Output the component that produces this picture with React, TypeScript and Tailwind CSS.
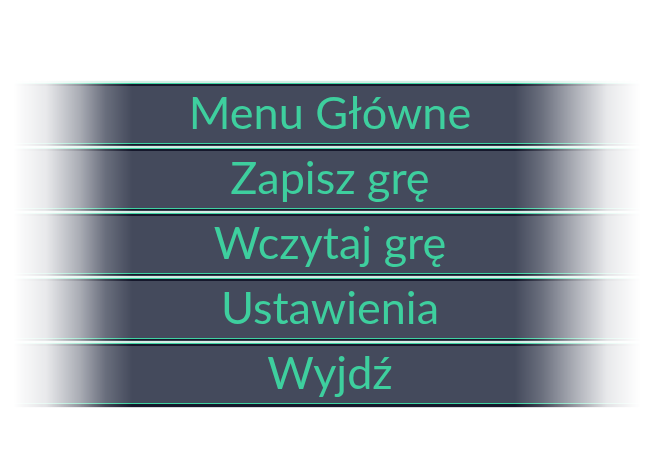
const items = ['Menu Główne', 'Zapisz grę', 'Wczytaj grę', 'Ustawienia', 'Wyjdź'];

export default function App() {
  return (
    <div className="w-[660px] h-[463px] bg-white pt-[79px] font-['Lato',sans-serif]">
      <div className="flex flex-col gap-[4px] py-[4px] [mask-image:linear-gradient(to_right,transparent_2%,rgba(0,0,0,0.12)_7%,rgba(0,0,0,0.45)_12%,rgba(0,0,0,0.8)_16%,black_20%,black_78%,rgba(0,0,0,0.8)_82%,rgba(0,0,0,0.45)_87%,rgba(0,0,0,0.12)_92%,transparent_97%)]">
        {items.map((label) => (
          <div
            key={label}
            className="h-[61px] flex items-center justify-center border-y border-[#3fd3a2] bg-[#444a5c] shadow-[inset_0_2px_0_#15172b,0_3px_1px_#15172b,0_-2px_1px_#d3ece4] text-[#3ecf9e] text-[45px] leading-none pb-[2px]"
          >
            {label}
          </div>
        ))}
      </div>
    </div>
  );
}
